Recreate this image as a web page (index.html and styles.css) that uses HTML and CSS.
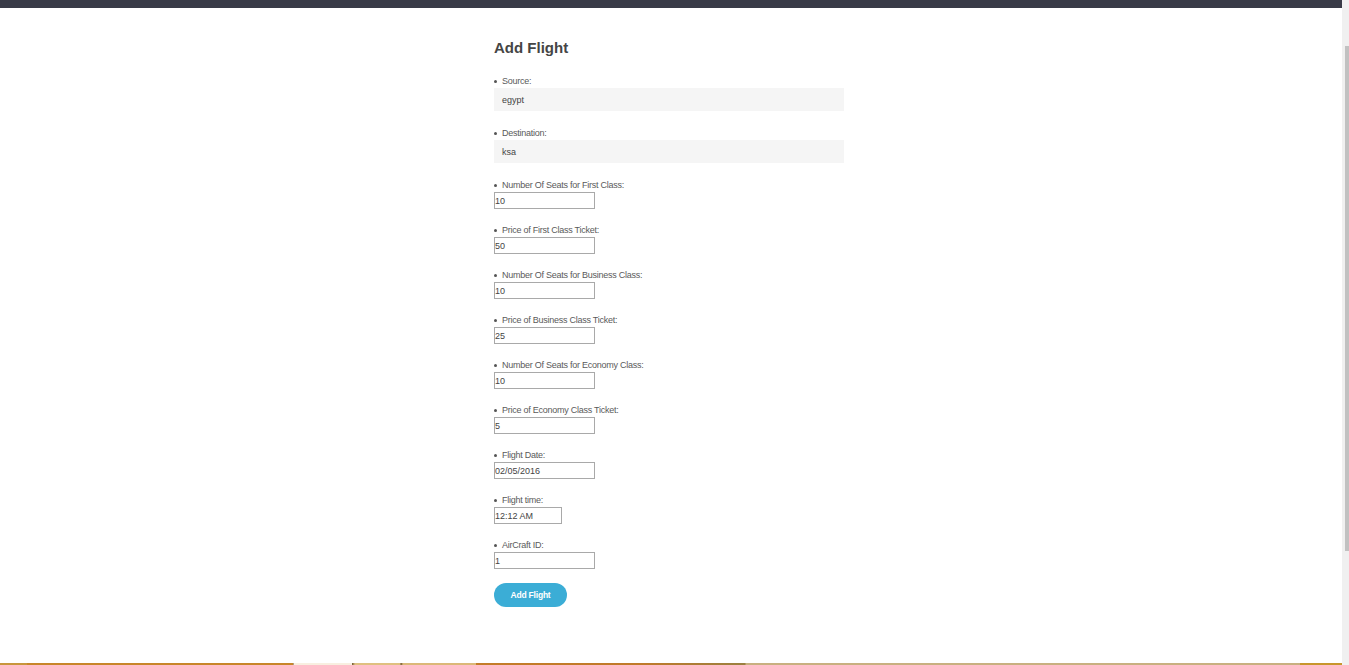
FILE: index.html
```html
<!DOCTYPE html>
<html>
<head>
<meta charset="utf-8">
<title>Add Flight</title>
<link rel="stylesheet" href="styles.css">
</head>
<body>
<div class="page">
  <header class="topbar"></header>
  <main class="content">
    <h1 class="title">Add Flight</h1>
    <ul class="fields">
      <li class="field">
        <span class="label">Source:</span>
        <div class="static">egypt</div>
      </li>
      <li class="field">
        <span class="label">Destination:</span>
        <div class="static">ksa</div>
      </li>
      <li class="field">
        <span class="label">Number Of Seats for First Class:</span>
        <input class="box" type="text" value="10">
      </li>
      <li class="field">
        <span class="label">Price of First Class Ticket:</span>
        <input class="box" type="text" value="50">
      </li>
      <li class="field">
        <span class="label">Number Of Seats for Business Class:</span>
        <input class="box" type="text" value="10">
      </li>
      <li class="field">
        <span class="label">Price of Business Class Ticket:</span>
        <input class="box" type="text" value="25">
      </li>
      <li class="field">
        <span class="label">Number Of Seats for Economy Class:</span>
        <input class="box" type="text" value="10">
      </li>
      <li class="field">
        <span class="label">Price of Economy Class Ticket:</span>
        <input class="box" type="text" value="5">
      </li>
      <li class="field">
        <span class="label">Flight Date:</span>
        <input class="box" type="text" value="02/05/2016">
      </li>
      <li class="field">
        <span class="label">Flight time:</span>
        <input class="box box-short" type="text" value="12:12 AM">
      </li>
      <li class="field">
        <span class="label">AirCraft ID:</span>
        <input class="box" type="text" value="1">
      </li>
    </ul>
    <button class="submit" type="button">Add Flight</button>
  </main>
  <footer class="footstrip"></footer>
</div>
<div class="scrollbar"><div class="thumb"></div></div>
</body>
</html>
```
FILE: styles.css
```css
html, body {
  margin: 0;
  padding: 0;
  height: 665px;
  overflow: hidden;
  background: #ffffff;
  font-family: "Liberation Sans", Arial, sans-serif;
}

.page {
  width: 1342px;
  height: 665px;
  display: flex;
  flex-direction: column;
}

.topbar {
  height: 8px;
  background: #393b47;
  flex: none;
}

.content {
  width: 354px;
  margin: 0 auto;
  flex: 1;
}

.title {
  margin: 31px 0 17px 0;
  font-size: 15px;
  line-height: 18px;
  font-weight: bold;
  color: #454545;
}

.fields {
  list-style: none;
  margin: 0;
  padding: 0;
}

.field {
  display: flex;
  flex-direction: column;
  align-items: flex-start;
  margin-bottom: 14px;
}

.field:nth-child(1),
.field:nth-child(2) {
  margin-bottom: 15px;
}

.label {
  box-sizing: border-box;
  display: flex;
  align-items: center;
  height: 12px;
  padding-top: 2px;
  margin-bottom: 2px;
  font-size: 9px;
  letter-spacing: -0.25px;
  color: #5a5a5a;
}

.label::before {
  content: "";
  width: 3px;
  height: 3px;
  border-radius: 50%;
  background: #555555;
  margin: 0 5px 0 0;
}

.static {
  box-sizing: border-box;
  width: 350px;
  height: 23px;
  padding-left: 8px;
  display: flex;
  align-items: center;
  background: #f5f5f5;
  font-size: 9px;
  color: #444444;
}

.box {
  box-sizing: border-box;
  width: 101px;
  height: 17px;
  margin: 0;
  padding: 0;
  border: 1px solid #a9a9a9;
  background: #ffffff;
  font-family: "Liberation Sans", Arial, sans-serif;
  font-size: 9px;
  color: #444444;
  outline: none;
}

.box-short {
  width: 68px;
}

.submit {
  display: block;
  width: 73px;
  height: 24px;
  margin: 0;
  padding: 0;
  border: none;
  border-radius: 12px;
  background: #3badd6;
  color: #ffffff;
  font-family: "Liberation Sans", Arial, sans-serif;
  font-size: 8.5px;
  font-weight: bold;
  letter-spacing: -0.2px;
}

.footstrip {
  height: 2px;
  flex: none;
  background: linear-gradient(to right,
    #c8963c 0px, #c8963c 27px,
    #c8862a 27px, #c8862a 293px,
    #6b5430 293px, #f8efe0 294px, #f8efe0 352px,
    #6b5430 352px, #dfc080 355px, #dfc080 400px,
    #6b5430 401px, #dbb878 403px, #dbb878 476px,
    #c47c28 476px, #c07a2a 640px, #9a8040 745px,
    #c8b080 746px, #c8b080 1300px,
    #c8962c 1300px, #c8962c 1342px);
}

.scrollbar {
  position: fixed;
  top: 0;
  right: 0;
  width: 7px;
  height: 665px;
  background: #f0f0f0;
}

.thumb {
  position: absolute;
  top: 46px;
  left: 3px;
  width: 4px;
  height: 505px;
  background: #c1c1c1;
}
```
